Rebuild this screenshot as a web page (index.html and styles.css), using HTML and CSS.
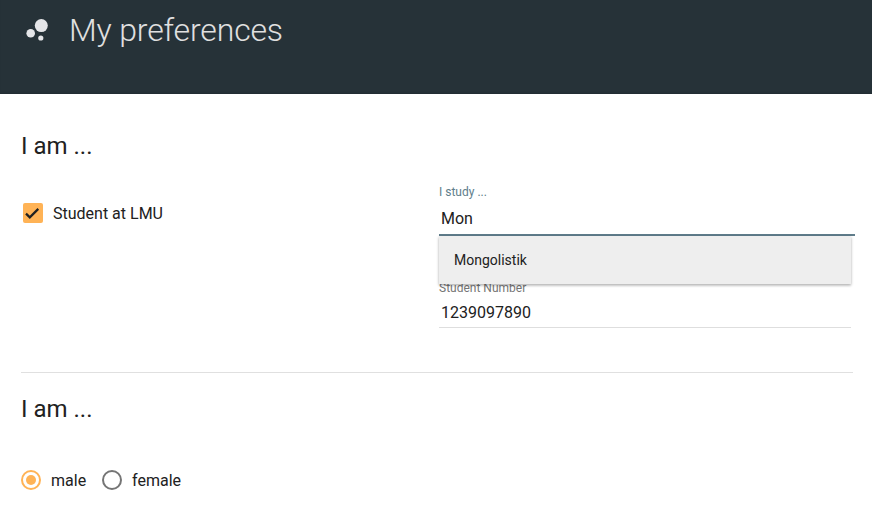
FILE: index.html
```html
<!DOCTYPE html>
<html lang="en">
<head>
<meta charset="utf-8">
<title>My preferences</title>
<link rel="stylesheet" href="styles.css">
</head>
<body>
<header class="toolbar">
  <svg class="logo" width="24" height="24" viewBox="0 0 24 24"><circle cx="5.7" cy="15.3" r="4.3"/><circle cx="16.3" cy="7.6" r="6.5"/><circle cx="15.8" cy="20" r="2.6"/></svg>
  <h1>My preferences</h1>
</header>
<main>
  <section class="status">
    <h2>I am ...</h2>
    <div class="columns">
      <label class="option check"><span class="box"><svg width="20" height="20" viewBox="0 0 20 20"><path d="M3 10.6 6.8 14.4 15.3 5.9"/></svg></span><span class="text">Student at LMU</span></label>
      <div class="fields">
        <div class="field active">
          <div class="caption">I study ...</div>
          <div class="value">Mon</div>
          <div class="menu">Mongolistik</div>
        </div>
        <div class="field">
          <div class="caption">Student Number</div>
          <div class="value">1239097890</div>
        </div>
      </div>
    </div>
  </section>
  <section class="gender">
    <h2>I am ...</h2>
    <div class="radios">
      <label class="option"><span class="radio selected"></span><span class="text">male</span></label>
      <label class="option"><span class="radio"></span><span class="text">female</span></label>
    </div>
  </section>
</main>
</body>
</html>
```
FILE: styles.css
```css
* { box-sizing: border-box; }
body {
  margin: 0;
  height: 507px;
  overflow: hidden;
  background: #fff;
  color: #212121;
  font: 16px/20px Roboto, sans-serif;
}
.toolbar {
  display: flex;
  align-items: flex-start;
  height: 94px;
  padding: 10px 25px;
  background: #263238;
  box-shadow: inset 0 -2px 2px -1px rgba(0, 0, 0, .12);
}
.logo { margin-top: 8px; fill: #e4e5e8; }
h1 {
  margin: 0 0 0 20px;
  color: #e0e0e0;
  font-size: 32px;
  font-weight: 300;
  letter-spacing: -.16px;
  line-height: 40px;
}
main { padding: 36px 19px 0 21px; }
h2 {
  margin: 0;
  font-size: 24px;
  font-weight: 400;
  line-height: 32px;
}
.status {
  height: 243px;
  border-bottom: 1px solid #e0e0e0;
}
.columns {
  display: grid;
  grid-template-columns: 418px 412px;
  align-items: start;
}
.option { display: flex; align-items: center; gap: 10px; height: 20px; }
.text { padding-top: 2px; }
.check { margin: 41px 0 0 2px; }
.box {
  width: 20px;
  height: 20px;
  border-radius: 2px;
  background: #ffb356;
}
.box svg { display: block; fill: none; stroke: #212121; stroke-width: 2.2; }
.fields { padding-top: 22px; }
.field {
  position: relative;
  height: 48px;
  margin-bottom: 44px;
  border-bottom: 1px solid #dedede;
}
.field.active {
  width: 416px;
  height: 52px;
  border-bottom: 2px solid #607d8b;
}
.caption { color: #757575; font-size: 12px; line-height: 16px; }
.active .caption { color: #607d8b; }
.value { padding: 5px 2px 0; line-height: 24px; }
.active .value { padding-top: 7px; }
.menu {
  position: absolute;
  top: 52px;
  left: 0;
  z-index: 1;
  width: 412px;
  height: 48px;
  padding-left: 15px;
  background: #eee;
  font-size: 14px;
  line-height: 48px;
  box-shadow: 0 1px 3px rgba(0, 0, 0, .25), 0 2px 2px rgba(0, 0, 0, .1);
}
.gender { padding-top: 20px; }
.radios { display: flex; gap: 16px; margin-top: 45px; }
.radio {
  width: 20px;
  height: 20px;
  padding: 3px;
  border: 2px solid #757575;
  border-radius: 50%;
}
.radio.selected { border-color: #ffb356; }
.radio.selected::before {
  content: "";
  display: block;
  width: 10px;
  height: 10px;
  border-radius: 50%;
  background: #ffb356;
}
```
